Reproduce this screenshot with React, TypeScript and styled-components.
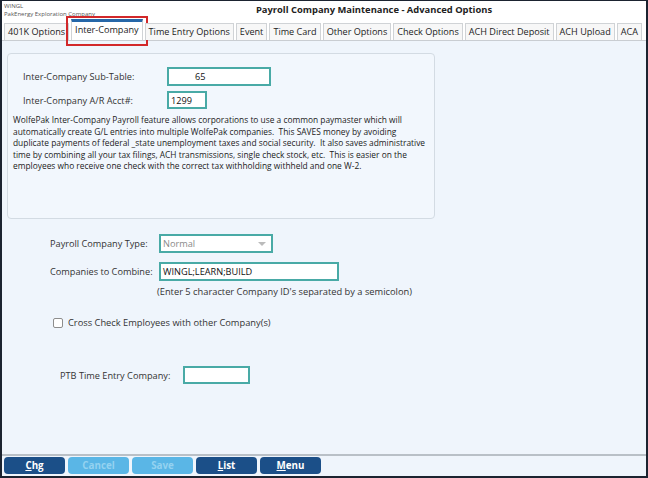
import styled, { createGlobalStyle } from 'styled-components';

const Global = createGlobalStyle`
  html, body { margin: 0; padding: 0; }
  body { font-family: "Open Sans", "Noto Sans", sans-serif; }
`;

const Frame = styled.div`
  width: 648px;
  height: 478px;
  box-sizing: border-box;
  border: 2px solid #1b2330;
  border-top-width: 1px;
  display: flex;
  flex-direction: column;
  background: #eff5fc;
  overflow: hidden;
`;

const Header = styled.div`
  height: 18px;
  background: #fff;
  display: flex;
  align-items: flex-start;
`;

const Company = styled.div`
  width: 98px;
  padding: 1px 0 0 2px;
  font-size: 6px;
  line-height: 8px;
  color: #555;
`;

const Title = styled.div`
  flex: 1;
  text-align: center;
  font-weight: 700;
  font-size: 9.4px;
  line-height: 18px;
  color: #222;
`;

const TabBar = styled.div`
  background: #fff;
  display: flex;
  align-items: flex-end;
  gap: 2px;
  padding: 0 0 0 2px;
  height: 21px;
  border-bottom: 1px solid #c9cdd2;
`;

const Tab = styled.div<{ $active?: boolean }>`
  position: relative;
  height: ${p => (p.$active ? '21px' : '17px')};
  box-sizing: border-box;
  padding: 0 3px;
  font-size: 9.1px;
  line-height: 16px;
  color: #222;
  white-space: nowrap;
  background: ${p => (p.$active ? '#fff' : '#f7f7f7')};
  border: 1px solid #d0d3d6;
  border-bottom: none;
  border-top: ${p => (p.$active ? '3px solid #2667a8' : '1px solid #d0d3d6')};
  ${p =>
    p.$active &&
    `
    &::after {
      content: '';
      position: absolute;
      left: -6px;
      right: -6px;
      top: -6px;
      bottom: -6px;
      border: 2px solid #d2282a;
    }
  `}
`;

const Body = styled.div`
  flex: 1;
  padding: 12px 0 0 5px;
  display: flex;
  flex-direction: column;
`;

const Panel = styled.div`
  width: 428px;
  height: 166px;
  box-sizing: border-box;
  border: 1px solid #d3dbe3;
  border-radius: 4px;
  background: #f2f7fd;
  padding: 13px 4px 0 5px;
`;

const PanelRow = styled.div`
  display: flex;
  align-items: center;
  margin-bottom: 5px;
`;

const Label = styled.span<{ $w: number; $pl: number }>`
  width: ${p => p.$w}px;
  padding-left: ${p => p.$pl}px;
  box-sizing: border-box;
  font-size: 9.2px;
  color: #333;
  white-space: nowrap;
`;

const Input = styled.div<{ $w: number; $h?: number; $muted?: boolean }>`
  width: ${p => p.$w}px;
  height: ${p => p.$h ?? 19}px;
  box-sizing: border-box;
  border: 2px solid #49aaa6;
  background: #fff;
  font-size: 9.2px;
  line-height: 15px;
  padding: 0 2px;
  color: ${p => (p.$muted ? '#8a8a8a' : '#111')};
  display: flex;
  align-items: center;
  justify-content: space-between;
`;

const Caret = styled.span`
  width: 0;
  height: 0;
  border-left: 4px solid transparent;
  border-right: 4px solid transparent;
  border-top: 4px solid #bbb;
  margin-right: 3px;
`;

const Paragraph = styled.p`
  margin: 2px 0 0;
  font-size: 8.4px;
  line-height: 11.6px;
  color: #222;
`;

const Form = styled.div`
  padding: 15px 0 0 0;
  display: flex;
  flex-direction: column;
`;

const FormRow = styled.div<{ $mt?: number }>`
  display: flex;
  align-items: center;
  margin-top: ${p => p.$mt ?? 0}px;
`;

const Hint = styled.div`
  padding-left: 150px;
  margin-top: 4px;
  font-size: 9.3px;
  color: #333;
`;

const CheckRow = styled.label`
  display: flex;
  align-items: center;
  gap: 5px;
  margin: 18px 0 0 46px;
  font-size: 9.3px;
  color: #333;
`;

const Box = styled.span`
  width: 10px;
  height: 10px;
  box-sizing: border-box;
  border: 1px solid #8d8d8d;
  border-radius: 2px;
  background: #fff;
`;

const Footer = styled.div`
  border-top: 2px solid #b9c0c7;
  height: 19px;
  display: flex;
  align-items: flex-start;
  gap: 3px;
  padding: 1px 0 0 2px;
  background: #eff5fc;
`;

const Btn = styled.div<{ $disabled?: boolean }>`
  width: 61px;
  height: 17px;
  border-radius: 4px;
  background: ${p => (p.$disabled ? '#5ab6e6' : '#1b4f88')};
  color: ${p => (p.$disabled ? '#94d2f0' : '#fff')};
  font-weight: 700;
  font-size: 9.8px;
  line-height: 17px;
  text-align: center;
  u { text-decoration: underline; }
`;

export default function App() {
  const tabs = [
    '401K Options',
    'Inter-Company',
    'Time Entry Options',
    'Event',
    'Time Card',
    'Other Options',
    'Check Options',
    'ACH Direct Deposit',
    'ACH Upload',
    'ACA',
  ];
  return (
    <Frame>
      <Global />
      <Header>
        <Company>
          <div>WINGL</div>
          <div>PakEnergy Exploration Company</div>
        </Company>
        <Title>Payroll Company Maintenance - Advanced Options</Title>
      </Header>
      <TabBar>
        {tabs.map(t => (
          <Tab key={t} $active={t === 'Inter-Company'}>
            {t}
          </Tab>
        ))}
      </TabBar>
      <Body>
        <Panel>
          <PanelRow>
            <Label $w={154} $pl={10}>Inter-Company Sub-Table:</Label>
            <Input $w={104} style={{ paddingLeft: 26 }}>65</Input>
          </PanelRow>
          <PanelRow>
            <Label $w={154} $pl={10}>Inter-Company A/R Acct#:</Label>
            <Input $w={40} $h={18}>1299</Input>
          </PanelRow>
          <Paragraph>
            WolfePak Inter-Company Payroll feature allows corporations to use a common paymaster which will
            automatically create G/L entries into multiple WolfePak companies.&nbsp; This SAVES money by avoiding
            duplicate payments of federal _state unemployment taxes and social security.&nbsp; It also saves
            administrative time by combining all your tax filings, ACH transmissions, single check stock, etc.&nbsp;
            This is easier on the employees who receive one check with the correct tax withholding withheld and
            one W-2.
          </Paragraph>
        </Panel>
        <Form>
          <FormRow>
            <Label $w={152} $pl={43}>Payroll Company Type:</Label>
            <Input $w={114} $muted>
              Normal
              <Caret />
            </Input>
          </FormRow>
          <FormRow $mt={9}>
            <Label $w={152} $pl={43}>Companies to Combine:</Label>
            <Input $w={180}>WINGL;LEARN;BUILD</Input>
          </FormRow>
          <Hint>(Enter 5 character Company ID's separated by a semicolon)</Hint>
          <CheckRow>
            <Box />
            Cross Check Employees with other Company(s)
          </CheckRow>
          <FormRow $mt={37}>
            <Label $w={176} $pl={53}>PTB Time Entry Company:</Label>
            <Input $w={67} $h={18} />
          </FormRow>
        </Form>
      </Body>
      <Footer>
        <Btn>
          <u>C</u>hg
        </Btn>
        <Btn $disabled>Cancel</Btn>
        <Btn $disabled>Save</Btn>
        <Btn>
          <u>L</u>ist
        </Btn>
        <Btn>
          <u>M</u>enu
        </Btn>
      </Footer>
    </Frame>
  );
}
